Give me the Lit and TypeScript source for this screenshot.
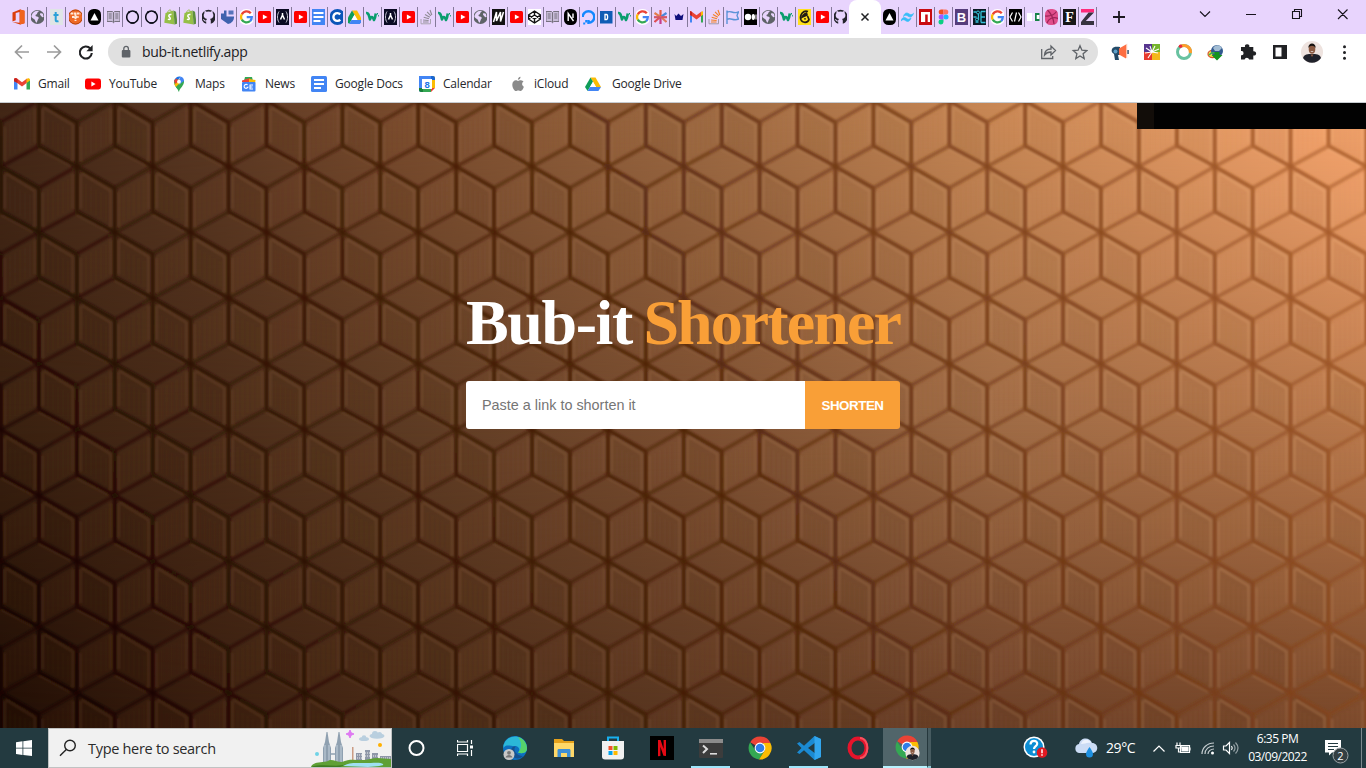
import { LitElement, html, css, svg } from "lit";
import { customElement } from "lit/decorators.js";

/* ---------- favicon drawings, each on a 16 x 16 grid ---------- */
const G = svg`<circle cx="8" cy="8" r="8" fill="#fff"/><g fill="none" stroke-width="2.3"><path d="M12.3 4.2A5.4 5.4 0 0 0 3.3 5.4" stroke="#ea4335"/><path d="M3.3 5.3A5.4 5.4 0 0 0 3.3 10.7" stroke="#fbbc05"/><path d="M3.3 10.6A5.4 5.4 0 0 0 11.7 12" stroke="#34a853"/><path d="M11.6 12.1A5.4 5.4 0 0 0 13.3 8.1H8.2" stroke="#4285f4"/></g>`;
const YT = svg`<rect x="0" y="2.5" width="16" height="11" rx="2.4" fill="#f00"/><path d="M6.4 5.6v4.8L10.6 8z" fill="#fff"/>`;
const YT_TAB = svg`<rect x="1.5" y="2" width="13" height="12" rx="1.5" fill="#f00"/><path d="M6.4 5.4v5.2L11 8z" fill="#fff"/>`;
const GLOBE = svg`<circle cx="8" cy="8" r="7" fill="#5f6368"/><path d="M3 4.5c2-2.6 4.5-3 6.3-2.6-.2 1.5-1.8 1.2-1.6 2.4.2 1.3-1.9 1-1.7 2.4.1 1 2.3.5 3 1.6.7 1.2-.5 1.8-.8 2.8l-1 2.6C5.5 13 6 11 4.8 10.2 3.2 9.2 1.7 8.5 1.9 7z" fill="#e8d4fd"/><path d="M10.5 4.5c1.4-.4 2.5-.2 3 .6l.6 3c-1 .4-1.9 0-2.2-.8-.3-.9-1.8-.9-1.4-2.8z" fill="#e8d4fd"/>`;
const W = svg`<path d="M1.500 4C4 3.500 4.500 6 5.500 10.500 6.500 7 8 7 9.500 11 10.500 9 11 7 11.300 4.500" fill="none" stroke="#0a9d6e" stroke-width="2.600" stroke-linejoin="round"/><path d="M13 4v1.500M14.200 6v1.500" stroke="#0a9d6e"/>`;
const TRI = svg`<rect x="1.500" width="13" height="16" rx="5.500" fill="#000"/><path d="M8 4l4 7.500H4z" fill="#fff"/>`;
const RING = svg`<ellipse cx="8" cy="8" rx="5.800" ry="6" fill="none" stroke="#0c0c18" stroke-width="1.500"/><path d="M3.500 3l2 .5M12.500 3l-2 .5M6 14h4" stroke="#0c0c18" stroke-width="1.600"/>`;
const SHOP = svg`<path d="M3 4l8-2.500 1.200 14L1.800 13.800z" fill="#95bf47"/><path d="M11 1.500l2.500 1.200L15 14.700l-2.900.8z" fill="#5e8e3e"/><path d="M5 4c.5-3.500 3.800-4 4-1" fill="none" stroke="#95bf47"/><path d="M9 5.500C6.500 5 5.500 7 7 8.200c1.500 1.200.8 3-1.600 1.900" fill="none" stroke="#fff" stroke-width="1.500"/>`;
const GH = svg`<path d="M8 .8a7.200 7.200 0 0 0-2.300 14v-2.400c-2 .4-2.500-.8-2.900-1.600-.3-.5-.7-.7-.7-.7 1.400-.3 1.800 1 2.400 1.300.6.300 1 .1 1.300-.2.100-.7.400-1 .8-1.300-2.200-.3-3.400-1.500-3.400-3.700 0-1 .4-1.700.8-2.200-.2-.7-.1-1.500.2-2.100 0 0 1 0 2 .9a7 7 0 0 1 3.700 0c1-.9 2-.9 2-.9.300.700.4 1.400.2 2.100.5.600.8 1.300.8 2.200 0 2.200-1.200 3.400-3.400 3.700.5.500.8 1 .8 1.800v3.100A7.200 7.200 0 0 0 8 .8z" fill="#24232b"/>`;
const BOOK = svg`<path d="M1.500 2.500H7L8 3.500 9 2.500h5.500v10H9.300L8 13.700 6.700 12.500H1.500z" fill="#c9bdd9" stroke="#77717f"/><path d="M8 3.500v10M3.200 5h3M3.200 7h3M3.200 9h3M9.800 5h3M9.800 7h3M9.800 9h3" stroke="#77717f"/>`;
const DOCS = svg`<rect width="16" height="16" rx="1.500" fill="#4285f4"/><path d="M3 4h10M3 8h10M3 12h7" stroke="#fff" stroke-width="2"/>`;
const ALPHA = svg`<rect x="1.500" width="13" height="16" fill="#0a0a23"/><path d="M4.500 2.500C2.500 5.500 2.500 10.500 4.500 13.500M11.500 2.500c2 3 2 8 0 11" stroke="#c8c8d4" fill="none"/><path d="M8 4v2L6 10.500M8 6l2 4.500" stroke="#fff" stroke-width="1.500" fill="none"/>`;
const DRIVE = svg`<path d="M5.500 1.500h5L16 11h-5z" fill="#fbbc04"/><path d="M5.500 1.500L0 11l2.600 4 5.400-9.300z" fill="#0f9d58"/><path d="M2.600 15h10.800L16 11H5z" fill="#4285f4"/><path d="M8 5.700L5 11h6z" fill="#fff"/>`;
const so = (c: string, d: string) => svg`<path d="M2.500 10v4.800h9.500V10" fill="none" stroke="${d}"/><path d="M4.500 13h5.600M4.600 11l5.500.5M5.200 8.300l5.300 1.500M6.500 5.400l4.800 2.800M8.600 2.800l3.800 4M11.500 1l1.800 5" stroke="${c}" stroke-width="1.150"/>`;
const GMAIL = svg`<path d="M0 3.500v10h3.500V6.800z" fill="#4285f4"/><path d="M12.500 6.800v6.700H16v-10z" fill="#34a853"/><path d="M0 3.500C0 2 2 1.700 3 2.500L8 6.300 13 2.500v4.300L8 10.500 3 6.800 0 5z" fill="#ea4335"/><path d="M12.500 3v4L16 4.600C16.300 2.300 14.300 1.500 12.500 3z" fill="#fbbc04"/><path d="M0 3.500v1.800L3.500 7V3C1.700 1.500 0 2.300 0 3.500z" fill="#c5221f"/>`;
const letter = (bg: string, t: string, fg = "#fff", fam = "Liberation Sans", sz = 13) => svg`<rect x="1.500" width="13" height="16" fill="${bg}"/><text x="8" y="12.700" text-anchor="middle" font-family="${fam}" font-weight="700" font-size="${sz}" fill="${fg}">${t}</text>`;

const OFFICE = svg`<path d="M9.500.5L14 1.800v12.400L9.500 15.500 2 13l7 .7V3L5.200 4v7.200L2 12.600V3.500z" fill="#dc3c0a"/><path d="M9.500.5L14 1.800v12.400l-4.500 1.300z" fill="#f0641e"/>`;
const TW_T = svg`<rect x="1.500" width="13" height="16" fill="#dfe5e6"/><path d="M7.200 3v8.200c0 1 1 1.400 2.800 1M5 6h5" stroke="#29a0d8" stroke-width="2" fill="none"/>`;
const ORANGE = svg`<circle cx="8" cy="8" r="7.400" fill="#ef6a25"/><path d="M3 4.500h10M8 4.500V12M4.500 8h7" stroke="#ffe9d8" stroke-width="1.900" stroke-dasharray="2.600 .6" fill="none"/><circle cx="8" cy="8" r="7" fill="none" stroke="#b54713"/>`;
const BLUE = svg`<path d="M7 1.500v6H14.500A7 7 0 0 1 8.500 15L1.500 10V4.500h3V1.500z" fill="#3f62ae"/><path d="M9 1.500h5v4H9z" fill="#5674bb"/>`;
const C = svg`<circle cx="9" cy="8" r="8" fill="#0b56b8"/><path d="M11.700 5.400a3.900 3.900 0 1 0 0 5.200" fill="none" stroke="#fff" stroke-width="2.400"/>`;
const M = svg`<rect x="1.500" width="13" height="16" fill="#111"/><path d="M3 13L6 3v9L10 3v9.500L13 3" fill="none" stroke="#fff" stroke-width="1.500"/>`;
const CODEPEN = svg`<rect x="1.500" width="13" height="16" fill="#fff"/><path d="M8 2l6 4v4l-6 4-6-4V6zM2 6l6 4 6-4M2 10l6-4 6 4M8 2v4M8 10v4" fill="none" stroke="#111" stroke-width="1.400"/>`;
const NEXT = svg`<rect x="1.500" width="13" height="16" rx="5.500" fill="#000"/><path d="M5.700 12V4.500L11 12M10.500 4.500V9" fill="none" stroke="#fff" stroke-width="1.400"/>`;
const OCEAN = svg`<path d="M2.200 8A5.800 5.800 0 1 1 8 13.800V11" fill="none" stroke="#1488ff" stroke-width="2.400"/><path d="M4.700 11H7v2.500H4.700zM2.700 13.500h2v2h-2z" fill="#1488ff"/>`;
const D = svg`<rect x="1.500" y="2" width="12.500" height="12.500" fill="#0f5cb5"/><path d="M6.500 5.500h1.500c1.500 0 1.500 5 0 5H6.500z" fill="none" stroke="#fff" stroke-width="1.300"/>`;
const AST = svg`<g stroke-width="2.200"><path d="M8 1v6" stroke="#e65a42"/><path d="M8 9v6" stroke="#c53e8b"/><path d="M2 4l5 3.400" stroke="#e37d4b"/><path d="M14 4L9 7.400" stroke="#4a87d9"/><path d="M2 13l5-4.500" stroke="#de4e56"/><path d="M14 13L9 8.500" stroke="#df7b5e"/><path d="M1 8.200h14" stroke="#d35668"/></g>`;
const CROWN = svg`<path d="M4 5l1.700 2L8 4.500 10.500 7 13 5l-1 6H5z" fill="#10107c"/>`;
const FLAG = svg`<path d="M2.500 1.500v13.500M2.500 3.500c3-3 6 2 11.500-.5l-1.500 3.500 1.500 3.500c-5 2.500-8-2-11.500.5" fill="none" stroke="#5b93d8" stroke-width="1.400"/>`;
const MEDIUM = svg`<rect x="1.500" width="13" height="16" fill="#000"/><circle cx="5.500" cy="8" r="3.200" fill="#fff"/><ellipse cx="10.800" cy="8" rx="1.700" ry="3" fill="#fff"/><path d="M13.500 5.500v5" stroke="#fff"/>`;
const CHIMP = svg`<rect x="1.500" width="13" height="16" fill="#ffe01b"/><path d="M11.500 2.500C7 .5 3 6 4.300 10.500 6 14.500 11.500 14 12.500 10.500L11 7" fill="none" stroke="#241c15" stroke-width="1.700"/><path d="M10.500 3C7 4 4.500 7 4.500 9.500L8 8l3.500-1.500z" fill="#241c15"/><circle cx="8.500" cy="9.800" r=".9" fill="#241c15"/>`;
const TAILWIND = svg`<path d="M4 7.500c.9-3.600 3.200-4.300 5.400-2.700 1.400 1.200 2.900 1.400 4.600-.5-.9 3.600-3.200 4.500-5.400 2.900C7.200 6 5.700 5.700 4 7.500zM1.500 12c.9-3.600 3.200-4.300 5.400-2.700 1.400 1.200 2.900 1.400 4.600-.5-.9 3.600-3.200 4.500-5.400 2.900C4.700 10.500 3.200 10.200 1.500 12z" fill="#38bdf8" stroke="#38bdf8" stroke-width=".7"/>`;
const NPM = svg`<rect x="1.500" width="13" height="16" fill="#c90a10"/><path d="M3.500 3h9v10h-2.300V5.500H7.700V13H3.500z" fill="#fff"/>`;
const FIGMA = svg`<path d="M8 .5H5.700a2.500 2.500 0 0 0 0 5H8z" fill="#f24e1e"/><path d="M8 .5h2.300a2.500 2.500 0 0 1 0 5H8z" fill="#ff7262"/><path d="M8 5.500H5.700a2.500 2.500 0 0 0 0 5H8z" fill="#a259ff"/><circle cx="10.500" cy="8" r="2.500" fill="#1abcfe"/><path d="M8 10.500H5.700a2.500 2.500 0 1 0 2.300 2.500z" fill="#0acf83"/>`;
const CIRCUIT = svg`<rect x="1.500" width="13" height="16" fill="#0a1a24"/><path d="M2 3h3M4 13h3M2 8h3M9.500 2.500h4.500M9.500 8h4M9.500 13.500H14M9.500 2.500v11M7 5v6" fill="none" stroke="#35c0d6" stroke-width="1.300"/><circle cx="6.500" cy="3.500" r="1.500" fill="none" stroke="#35c0d6"/><circle cx="5.500" cy="10.500" r="1.500" fill="none" stroke="#35c0d6"/>`;
const CODE = svg`<rect x="1.500" width="13" height="16" fill="#000"/><path d="M5 3.500L2.500 8 5 12.500M11 3.500L13.500 8 11 12.500M9 3.500l-2 9" fill="none" stroke="#fff" stroke-width="1.200"/>`;
const PATCH = svg`<path d="M1.500 4h5v8h-5z" fill="#fff"/><path d="M7 4h2.500v8H7z" fill="#f3e9ff"/><path d="M9.500 4H14v8H9.500z" fill="#168247"/><path d="M11.200 6H14v4h-2.800z" fill="#fff"/>`;
const DRIBBBLE = svg`<rect x="1.500" y="0" width="13" height="16" rx="5.500" fill="#e04e8b"/><path d="M4 1c4 4 6 9 6.500 14M1.500 7c5 .5 9-1 11.500-4.500M3.500 14c1.500-4.500 6-6.500 11-4.500" fill="none" stroke="#9c2458" stroke-width="1.200"/>`;
const Z = svg`<path d="M1.500 0h13v3.500h-13z" fill="#ff2a7a"/><path d="M14.500 3.500L6.300 12h8.200v4h-13v-3l7.600-9.500z" fill="#373340"/>`;

const tabsA = [OFFICE, GLOBE, TW_T, ORANGE, TRI, BOOK, RING, RING, SHOP, SHOP, GH, BLUE, G];
const tabsB = [YT_TAB, ALPHA, YT_TAB, DOCS, C, DRIVE, W, ALPHA, YT_TAB, so("#8f8b94", "#aaa4b0"), W, YT_TAB, GLOBE, M, YT_TAB, CODEPEN, BOOK, NEXT, OCEAN, D, W, G, AST, CROWN, GMAIL, so("#f48024", "#a39ba8"), FLAG, MEDIUM, GLOBE, W, CHIMP, YT_TAB];
const tabsC = [TRI, TAILWIND, NPM, FIGMA, letter("#563d7c", "B"), CIRCUIT, G, CODE, PATCH, DRIBBBLE, letter("#171717", "F", "#fff", "Liberation Serif", 14), Z];

const MAPS = svg`<path d="M8 16c-.6-3-5-5.500-5-10a5 5 0 0 1 1.200-3.300L8 6z" fill="#34a853"/><path d="M4.200 2.700A5 5 0 0 1 9.500.6L5 7.500 3.200 5z" fill="#1a73e8"/><path d="M9.500.6A5 5 0 0 1 13 6L8 8.500V4z" fill="#4285f4"/><path d="M13 5c.3 5-4.500 7-5 11-.5-2.500-2-3.500-3.200-5.200z" fill="#34a853"/><path d="M3.300 8L8 3l1 4-4.200 4z" fill="#fbbc04"/><path d="M3 5l2-2.500 3 2L4.500 8z" fill="#ea4335"/><circle cx="8" cy="5.700" r="1.900" fill="#fff"/>`;
const NEWS = svg`<path d="M4 1h7l1 4H3z" fill="#34a853"/><path d="M1 4.500l8-2.500 1 4H1z" fill="#ea4335"/><path d="M8 3l6.500 1L14 8H8z" fill="#fbbc04"/><rect x="1" y="6" width="13.500" height="9.500" rx="1" fill="#4285f4"/><path d="M6.600 9a2 2 0 1 0 .3 2.300H5.600M12 9H9v4h3M9 11h2.500" stroke="#fff" stroke-width="1.100" fill="none"/>`;
const CAL = svg`<path d="M0 0h12v4H4v12H2a2 2 0 0 1-2-2z" fill="#4285f4"/><path d="M12 0h2a2 2 0 0 1 2 2v10h-4z" fill="#fbbc04"/><path d="M12 0h2a2 2 0 0 1 2 2v2h-4z" fill="#1967d2"/><path d="M4 12h8v4H4z" fill="#34a853"/><path d="M12 12h4l-4 4z" fill="#ea4335"/><path d="M0 12h4v4H2a2 2 0 0 1-2-2z" fill="#188038"/><path d="M3 3h10v10H3z" fill="#fff"/><text x="8" y="11.500" text-anchor="middle" font-family="Liberation Sans" font-weight="700" font-size="9.500" fill="#1a73e8">8</text>`;
const APPLE = svg`<path d="M10.500.8c.1 1.700-1.100 3-2.600 3C7.800 2.300 9 1 10.500.8zM8 4.900c.7 0 1.500-.8 3-.7 1 .1 1.900.5 2.500 1.400-2 1.400-1.700 4.200.4 5.100-.5 1.600-1.700 4.300-3.300 4.300-.9 0-1.300-.6-2.300-.6-1.100 0-1.500.6-2.300.6-1.700 0-3.700-3.500-3.700-6.300S4.200 4.200 5.800 4.200c1 0 1.600.7 2.200.7z" fill="#8a8a8a"/>`;

const bookmarks: [any, string, number, number][] = [
  [GMAIL, "Gmail", 14, 31], [YT, "YouTube", 85, 46], [MAPS, "Maps", 171, 29], [NEWS, "News", 241, 29],
  [DOCS, "Google Docs", 311, 68], [CAL, "Calendar", 419, 47], [APPLE, "iCloud", 510, 34], [DRIVE, "Google Drive", 585, 70],
];

/* Tumbling-block relief: hubs sit on a staggered grid, every hub carries a rhombus and two faces. */
const P = 37.93, R = 65.8;
let dark = "", soft = "", light = "", glow = "", faceL = "", faceR = "", grain = "";
for (let r = -2; r < 11; r++) {
  for (let c = -1; c < 19; c++) {
    const x = 1 + P * (2 * c + (Math.abs(r) % 2)), y = 63.5 + R * r;
    const q = (a: number, b: number) => `${(x + a).toFixed(1)} ${(y + b).toFixed(1)}`;
    dark += `M${q(0, -44)}V${(y + 45).toFixed(1)}M${q(0, 0)}L${q(P, 21.5)}M${q(P, -20.5)}L${q(2 * P, 0)}`;
    soft += `M${q(0, 0)}L${q(P, -20.5)}M${q(P, 21.5)}L${q(2 * P, 0)}`;
    light += `M${q(5, 7.2)}L${q(P - 4.3, 24.5)}L${q(P - 4.3, 60)}M${q(4, 8)}V${(y + 42).toFixed(1)}`;
    glow += `M${q(P + 4, 26)}V${(y + 60).toFixed(1)}M${q(2 * P - 4.3, 8)}V${(y + 42).toFixed(1)}M${q(P, -17)}L${q(2 * P - 7, -1)}`;
    faceL += `M${q(0, 0)}L${q(P, 21.5)}L${q(P, R)}L${q(0, 45)}Z`;
    faceR += `M${q(P, 21.5)}L${q(2 * P, 0)}L${q(2 * P, 45)}L${q(P, R)}Z`;
    for (let k = 9; k < 32; k += 5) {
      grain += `M${q(k, 12 + k * 0.57)}V${(y + 39 + k * 0.54).toFixed(1)}M${q(P + k, 28 - k * 0.55)}V${(y + 60 - k * 0.54).toFixed(1)}`;
    }
  }
}

@customElement("app-root")
export class AppRoot extends LitElement {
  static styles = css`
    :host { display: flex; flex-direction: column; width: 1366px; height: 768px; overflow: hidden; font-family: "Open Sans", "Noto Sans", sans-serif; background: #fff; }
    svg { display: block; flex: none; }
    .tabs { height: 34px; background: #e8d4fd; display: flex; align-items: center; padding-left: 9px; }
    .tab { width: 18px; height: 20px; box-sizing: border-box; border-right: 1px solid #85799a; display: flex; align-items: center; justify-content: center; flex: none; }
    .wide { width: 19px; }
    .bare { border: none; width: 17px; }
    .active { width: 32px; height: 34px; background: #fff; border-radius: 8px 8px 0 0; display: flex; align-items: center; justify-content: center; flex: none; }
    .plus { margin-left: 16px; }
    .win { margin-left: 72px; display: flex; align-items: center; height: 28px; align-self: flex-start; }
    .bar { height: 36px; display: flex; align-items: center; flex: none; }
    .nav { width: 108px; height: 36px; }
    .pill { width: 990px; height: 28px; border-radius: 14px; background: #e0e0e0; display: flex; align-items: center; box-sizing: border-box; padding: 0 10px 0 12px; }
    .url { font-size: 14px; line-height: 28px; height: 28px; color: #202124; margin-left: 10px; flex: 1; letter-spacing: -0.32px; }
    .marks { height: 33px; flex: none; display: flex; box-sizing: border-box; padding: 0 0 5px 14px; align-items: center; border-bottom: 1px solid #c6cbd0; font-size: 12px; color: #27282c; }
    .mark { display: flex; align-items: center; flex: none; white-space: nowrap; letter-spacing: -0.2px; }
    .page { height: 625px; display: grid; flex: none; overflow: hidden; isolation: isolate; }
    .page > * { grid-area: 1 / 1; }
    .mid { background: linear-gradient(90deg, #3a2110 0, #492b18 200px, #5d3b23 400px, #7b4e30 680px, #a06c46 1000px, #ba794c 1366px); }
    .top { background: linear-gradient(90deg, #422616 0, #593722 200px, #794b2d 400px, #9c6942 700px, #c98855 1000px, #fba870 1366px); -webkit-mask-image: linear-gradient(#000, transparent 50%); mask-image: linear-gradient(#000, transparent 50%); }
    .low { background: linear-gradient(90deg, #200d04 0, #381d0e 200px, #472815 400px, #593620 680px, #6c4027 1000px, #784729 1366px); -webkit-mask-image: linear-gradient(transparent 50%, #000); mask-image: linear-gradient(transparent 50%, #000); }
    .relief { z-index: 1; }
    .redact { z-index: 2; width: 212px; height: 26px; background: #020202; border-left: 17px solid #120d09; justify-self: end; }
    .hero { z-index: 2; width: 434px; justify-self: center; padding-top: 180px; }
    h1 { margin: 0; height: 80px; font: 700 64px/79px "Liberation Serif", serif; color: #fff; display: flex; justify-content: space-between; white-space: nowrap; }
    .w1 { letter-spacing: -1.4px; }
    .w2 { letter-spacing: -1.9px; color: #f99f37; }
    .form { display: flex; height: 48px; margin-top: 18px; border-radius: 3px; overflow: hidden; font-family: "Liberation Sans", Arial, sans-serif; }
    .field { flex: 1; background: #fff; padding-left: 16px; font-size: 14.400px; line-height: 48px; color: #757575; }
    .go { width: 95px; background: #f99f37; color: #fff; font-weight: 700; font-size: 13.330px; line-height: 49px; text-align: center; letter-spacing: -0.45px; }
    .task { height: 40px; background: #233a40; display: flex; flex: none; color: #fff; overflow: hidden; }
    .start { width: 48px; }
    .search { width: 344px; flex: none; box-sizing: border-box; border: 1px solid #c0c2c2; background: #f1f1f1; display: flex; align-items: center; color: #2b2b2b; font-size: 14.500px; }
    .search span { flex: 1; margin-left: 11px; letter-spacing: -0.3px; }
    .app { width: 49px; height: 40px; display: flex; align-items: center; justify-content: center; box-sizing: border-box; flex: none; }
    .run { box-shadow: inset 5px 0 #233a40, inset -5px 0 #233a40, inset 0 -2px #9fe6fb; }
    .on { width: 44px; margin-left: 1px; background: #51656a; border-bottom: 2px solid #b8f3ff; padding: 2px 0 0 6px; }
    .stack { width: 4px; flex: none; height: 40px; background: #475b60; border-left: 1px solid #26383d; box-sizing: border-box; border-bottom: 2px solid #8cc8d4; }
    .help { margin-left: 92px; align-self: center; }
    .cloud { margin-left: 25px; align-self: center; }
    .temp { font-size: 14px; line-height: 40px; width: 46px; flex: none; margin-left: 8px; letter-spacing: -0.4px; }
    .tray { align-self: center; }
    .clock { width: 75px; flex: none; font-size: 12px; line-height: 18px; text-align: center; padding-top: 2px; letter-spacing: -0.5px; white-space: nowrap; }
    .note { margin-left: 1px; }
  `;

  tab(icon: any, cls = "") {
    return html`<div class="tab ${cls}"><svg width="13" height="16" viewBox="1.5 0 13 16">${icon}</svg></div>`;
  }

  chrome() {
    return svg`<path d="M0 0L-9.800-5.700A11.400 11.400 0 0 1 10.500-5H0z" fill="#ea4335"/><path d="M-9.900-5.700A11.400 11.400 0 0 0-1 11.400L4.500 2.500-4.500 2.500z" fill="#34a853"/><path d="M10.400-5A11.400 11.400 0 0 1-1 11.400L4.800 2.300 3-5z" fill="#fbbc04"/><circle r="5.400" fill="#fff"/><circle r="4.300" fill="#2f7de9"/>`;
  }

  face() {
    return svg`<circle r="11" fill="#eee3df"/><path d="M-9 6C-8 2-4 2 0 2s8 0 9 4A11 11 0 0 1-9 6z" fill="#20222b"/><ellipse cy="-3" rx="3.300" ry="4.800" fill="#8b5a42"/><path d="M-3.600-4c-.5-6 7.700-6 7.200 0C2-7-2-7-3.600-4z" fill="#14110f"/><path d="M-1.500 2.500L0 5l1.500-2.500z" fill="#8b5a42"/><path d="M-1.700-1q1.700 1.500 3.400 0z" fill="#fff"/>`;
  }

  render() {
    let edge = 14;
    return html`
      <div class="tabs">
        ${tabsA.map((t) => this.tab(t, "wide"))}${tabsB.map((t) => this.tab(t))}
        <div class="tab bare"><svg width="13" height="16" viewBox="1.5 0 13 16">${GH}</svg></div>
        <div class="active"><svg width="32" height="34" viewBox="0 0 32 34"><path d="M12.500 13.500l7 7M19.500 13.500l-7 7" stroke="#202124" stroke-width="1.500"/></svg></div>
        ${tabsC.map((t) => this.tab(t))}
        <svg class="plus" width="12" height="12" viewBox="0 0 12 12"><path d="M6 0v12M0 6h12" stroke="#1c1820" stroke-width="1.800"/></svg>
        <svg class="win" width="160" height="28" viewBox="0 0 160 28" fill="none" stroke="#17131c" stroke-width="1.100"><path d="M3 11.500l5 5 5-5M49 14.500h10M95.500 11.500h7v7h-7zM97.500 11V9.500h7v7h-2M141 9.500l9.500 9.500M150.500 9.500L141 19"/></svg>
      </div>
      <div class="bar">
        <svg class="nav" viewBox="0 0 108 36" fill="none"><path d="M29 18H16M22 11.500L15.500 18l6.500 6.500M47 18h13M54 11.500l6.500 6.500-6.500 6.500" stroke="#9b9b9b" stroke-width="1.700"/><path d="M90.300 14.500A6 6 0 1 0 91.800 19" stroke="#202124" stroke-width="2.100"/><path d="M92.600 11v6.200h-6.200z" fill="#202124"/></svg>
        <div class="pill">
          <svg width="12" height="14" viewBox="0 0 12 14"><rect x="1.800" y="5" width="8.600" height="7.500" rx="1" fill="#5f6368"/><path d="M3.800 5.500V3.700a2.300 2.300 0 0 1 4.600 0v1.800" fill="none" stroke="#5f6368" stroke-width="1.300"/></svg>
          <span class="url">bub-it.netlify.app</span>
          <svg width="48" height="18" viewBox="0 0 48 18" fill="none" stroke="#5f6368" stroke-width="1.300"><path d="M1.700 6v9.500h11V13M4.500 12c.3-4 3-6 6.500-6V3l4.500 4.500L11 12V9c-3 0-5 1-6.500 3z"/><path d="M40 2.700l1.900 4.500 4.900.4-3.700 3.200 1.100 4.800L40 13l-4.200 2.600 1.100-4.800-3.700-3.200 4.900-.4z"/></svg>
        </div>
        <svg width="268" height="36" viewBox="1098 34 268 36">
          <path d="M1112 49c2-3 5-2 8-2v8h-2l1 5h-4l-1-6c-2-1-3-3-2-5z" fill="#234a68"/><circle cx="1115.500" cy="51.500" r="2" fill="#5da0c9"/><path d="M1119 48.500l7-4v14l-7-4z" fill="#fd6e42"/><path d="M1128 50v4" stroke="#234a68" stroke-width="1.500"/><path d="M1126 44.500l1.200-1v15l-1.200-1z" fill="#ffc4ad"/>
          <path d="M1144 44h8v8h-8z" fill="#57368f"/><path d="M1152 44h8v8h-8z" fill="#76b52d"/><path d="M1144 52h8v8h-8z" fill="#e6392f"/><path d="M1152 52h8v8h-8z" fill="#f4b81c"/><path d="M1152 52l-6-4M1152 52l-2-6M1152 52l3-6M1152 52l7-3M1152 52l-4 6M1152 52l-7 1M1152 52l6 1" stroke="#fff" stroke-width="1.100"/>
          <circle cx="1184" cy="52" r="6.500" fill="none" stroke="#68c2a0" stroke-width="3"/><path d="M1181 46.200a6.500 6.500 0 0 1 9.400 6.800" fill="none" stroke="#ff9e2d" stroke-width="3"/><circle cx="1180.500" cy="46.300" r="1.800" fill="#e92c3b"/>
          <ellipse cx="1212.500" cy="54" rx="4.500" ry="3.600" fill="#f7e04a" stroke="#d4552b" stroke-width="1.200"/><circle cx="1217" cy="51" r="6" fill="#31598f"/><path d="M1213 48c3-4 7-3 9 0l-3 3h-4z" fill="#a3bdd4"/><path d="M1209 55c3-3 5-3 8-1" fill="none" stroke="#3cb34a" stroke-width="1.500"/><path d="M1214.500 52h5v3h3l-5.500 5.500-5.500-5.500h3z" fill="#14941c"/>
          <path d="M1241 47h4a2.200 2.200 0 1 1 4.300 0h4v4.300a2.200 2.200 0 1 1 0 4.200v4h-4.200a2.300 2.300 0 0 0-4.500 0H1241v-4.300a2.100 2.100 0 1 0 0-4.100z" fill="#202124"/>
          <path d="M1273 45h14v14h-14zM1275.500 47.500v9h6v-9z" fill="#202124" fill-rule="evenodd"/>
          <g transform="translate(1312 52)">${this.face()}</g>
          <g fill="#202124"><circle cx="1344.500" cy="46.800" r="1.500"/><circle cx="1344.500" cy="52.500" r="1.500"/><circle cx="1344.500" cy="58.200" r="1.500"/></g>
        </svg>
      </div>
      <div class="marks">
        ${bookmarks.map(([icon, name, x, w]) => {
          const gap = x - edge;
          const space = name === "Google Drive" ? 11 : 8;
          edge = x + 16 + space + w;
          return html`<div class="mark" style="margin-left:${gap}px;width:${16 + space + w}px;gap:${space}px"><svg width="16" height="16" viewBox="0 0 16 16">${icon}</svg><span>${name}</span></div>`;
        })}
      </div>
      <div class="page">
        <div class="mid"></div><div class="top"></div><div class="low"></div>
        <svg class="relief" width="1366" height="625" viewBox="0 0 1366 625" fill="none">
          <defs>
            <linearGradient id="d" gradientUnits="userSpaceOnUse" x1="100" y1="626" x2="1300" y2="0"><stop offset="0" stop-color="#150300"/><stop offset=".5" stop-color="#4e2007"/><stop offset="1" stop-color="#a65a27"/></linearGradient>
            <linearGradient id="l" gradientUnits="userSpaceOnUse" x1="100" y1="626" x2="1300" y2="0"><stop offset="0" stop-color="#754b30"/><stop offset=".5" stop-color="#ad7a52"/><stop offset="1" stop-color="#ffc084"/></linearGradient>
            <filter id="b" x="0" y="0" width="100%" height="100%"><feGaussianBlur stdDeviation=".9"/></filter>
          </defs>
          <path d="${faceL}" fill="#3a1400" opacity=".04"/><path d="${faceR}" fill="#ffb070" opacity=".02"/>
          <g filter="url(#b)"><path d="${grain}" stroke="url(#l)" stroke-width="1.400" opacity=".07"/><path d="${light}" stroke="url(#l)" stroke-width="1.500" opacity=".36"/><path d="${glow}" stroke="url(#l)" stroke-width="1.500" opacity=".25"/><path d="${soft}" stroke="url(#d)" stroke-width="3.800" opacity=".52"/><path d="${dark}" stroke="url(#d)" stroke-width="4.100" opacity=".76"/></g>
        </svg>
        <div class="redact"></div>
        <div class="hero">
          <h1><span class="w1">Bub-it</span><span class="w2">Shortener</span></h1>
          <div class="form"><div class="field">Paste a link to shorten it</div><div class="go">SHORTEN</div></div>
        </div>
      </div>
      <div class="task">
        <svg class="start" height="40" viewBox="0 0 48 40"><path d="M16 14.200l6.500-.9v6.400H16zM23.300 13.200L32 12v7.700h-8.700zM16 20.500h6.500v6.400l-6.500-.9zM23.300 20.500H32V28l-8.700-1.100z" fill="#fff"/></svg>
        <div class="search">
          <svg width="28" height="38" viewBox="0 0 28 38" fill="none" stroke="#222" stroke-width="1.400"><circle cx="21" cy="16.500" r="5.300"/><path d="M17.300 20.500L11 26.800"/></svg>
          <span>Type here to search</span>
          <svg width="80" height="38" viewBox="311 729 80 38">
            <circle cx="317" cy="754" r="2" fill="#6fd2e6"/><circle cx="380" cy="745" r="2" fill="#ffb000"/><path d="M350 730l1.200 2.800 2.800 1.200-2.800 1.200-1.200 2.800-1.200-2.800L346 734l2.800-1.200z" fill="#df79f2" stroke="#df79f2"/>
            <g fill="#b9cfdf"><ellipse cx="364" cy="739" rx="5" ry="2"/><circle cx="364" cy="737.500" r="2.300"/><ellipse cx="377" cy="736" rx="7.500" ry="2.700"/><circle cx="375" cy="734" r="3"/><circle cx="379.500" cy="734.500" r="2.500"/></g>
            <path d="M323 763v-15l2-6 1.500-10h1l1.500 10 2 6v15zM335 763v-15l2-6 1.500-10h1l1.500 10 2 6v15z" fill="#8fa0b0"/><path d="M325 745v17M329 745v17M337 745v17M341 745v17" stroke="#c4d1dc"/><path d="M331 754h5" stroke="#8fa0b0" stroke-width="1.500"/>
            <path d="M352 747h1.500v15H352z" fill="#cb9c84"/><path d="M356 753h6v9h-6zM365 750h5v12h-5zM372 753h6v9h-6zM380 756h11v6h-11z" fill="#8f97a8"/><path d="M357 755h5M357 758h5M365 753h5M365 756h5M373 756h5M381 758h9" stroke="#f1f1f1" stroke-dasharray="1 1"/>
            <path d="M311 767c2-6 12-4 17-6 3-3 8 1 14 1 10-5 18 0 28-3 8-2 14 0 21 0v8z" fill="#5fa035"/><path d="M311 767c12-4 25 1 37-3l-8 3z" fill="#3e7c20"/><path d="M343 766c6-4 14-3 22-3s16-1 18 1-7 2-15 3z" fill="#9fe0f2"/>
          </svg>
        </div>
        <div class="app"><svg width="20" height="20" viewBox="0 0 20 20"><circle cx="9.500" cy="10" r="7" fill="none" stroke="#fff" stroke-width="2"/></svg></div>
        <div class="app"><svg width="18" height="18" viewBox="0 0 18 18" fill="none" stroke="#fff" stroke-width="1.200"><path d="M.5 5.500h10v7H.5zM.5 1v2h10V1M.5 17v-2h10v2M14.500 1v4M14.500 11v6"/><path d="M13 6.500h3v3h-3z" fill="#fff" stroke="none"/></svg></div>
        <div class="app"><svg width="24" height="24" viewBox="0 0 24 24"><circle cx="12" cy="12" r="12" fill="#0d6fc0"/><path d="M.5 9A12 12 0 0 1 24 12c0 5-4.500 6-9 4.500 3-2 1-6.500-3-6.500C6 10 3 8 .5 12z" fill="#2bb7d8"/><path d="M15 1a12 12 0 0 1 9 11c0 5-4.500 6-9 4.500C19 12 19 6 15 1z" fill="#57d36a"/><path d="M8 15c0-4 3-5 5-4.500C9.500 13 12 19 20 20 15 25 8 22 8 15z" fill="#15518f"/><circle cx="6" cy="18.500" r="5.500" fill="#c8c8c8"/><circle cx="6" cy="16.800" r="1.900" fill="#777"/><path d="M2.600 21.500c.5-3.500 6.300-3.500 6.800 0z" fill="#777"/></svg></div>
        <div class="app"><svg width="22" height="20" viewBox="0 0 22 20"><path d="M1 1h8l2 2h10v16H1z" fill="#e5a11b"/><path d="M1 5h20v14H1z" fill="#ffd868"/><path d="M4.500 19v-6.500c0-1 .5-1.500 1.500-1.500h10c1 0 1.500.5 1.500 1.500V19h-3.500v-4H8v4z" fill="#3e8fd6"/></svg></div>
        <div class="app"><svg width="22" height="24" viewBox="0 0 22 24"><path d="M6 6V1.500h10V6" fill="none" stroke="#18b0ee" stroke-width="2"/><path d="M0 5h22v15.500a3 3 0 0 1-3 3H3a3 3 0 0 1-3-3z" fill="#f1f1f1"/><path d="M6.500 10h4v4h-4z" fill="#f2502c"/><path d="M11.500 10h4v4h-4z" fill="#7fba00"/><path d="M6.500 15h4v4h-4z" fill="#00a4ef"/><path d="M11.500 15h4v4h-4z" fill="#ffb900"/></svg></div>
        <div class="app"><svg width="24" height="24" viewBox="0 0 24 24"><path d="M0 0h24v24H0z" fill="#000"/><path d="M8 4h2.600l3 9V4H16v16l-2.600-.3-3-9V20L8 20.200z" fill="#e50914"/></svg></div>
        <div class="app run"><svg width="24" height="19" viewBox="0 0 24 19"><rect width="24" height="19" rx="1" fill="#3c3c3c"/><path d="M0 0h24v4H0z" fill="#8c8c8c"/><path d="M4 6.500l4 3.500-4 4" fill="none" stroke="#ddd" stroke-width="2"/><path d="M11 14.800h7" stroke="#ddd" stroke-width="1.600"/></svg></div>
        <div class="app"><svg width="24" height="24" viewBox="-12 -12 24 24">${this.chrome()}</svg></div>
        <div class="app run"><svg width="24" height="24" viewBox="0 0 24 24"><path d="M17.500 0L24 3v18l-6.500 3L7 14.200 2.500 18 0 16.500 4.500 12 0 7.500 2.500 6 7 9.800zM18 6.800L11 12l7 5.200z" fill="#1b8ad2" fill-rule="evenodd"/><path d="M17.500 0L24 3v18l-6.500 3z" fill="#32a6ee"/></svg></div>
        <div class="app"><svg width="22" height="24" viewBox="0 0 22 24"><ellipse cx="11" cy="12" rx="8.500" ry="9.500" fill="none" stroke="#e5142b" stroke-width="4"/><path d="M13 2c5 0 7.300 5 7.300 10s-2.300 10-7.300 10" fill="none" stroke="#f9505e" stroke-width="2"/></svg></div>
        <div class="app on"><svg width="26" height="26" viewBox="-12 -12 26 26">${this.chrome()}<g transform="translate(5.500 6) scale(.65)">${this.face()}</g></svg></div>
        <div class="stack"></div>
        <svg class="help" width="26" height="24" viewBox="0 0 26 24"><circle cx="11" cy="11" r="10.500" fill="#fff"/><circle cx="11" cy="11" r="9" fill="#0d8ed4"/><path d="M7.500 8.500c0-5 7-4.500 6.700-.5-.2 2-3.200 2.500-3.200 5" fill="none" stroke="#fff" stroke-width="2.200"/><circle cx="11" cy="16" r="1.400" fill="#fff"/><circle cx="19" cy="16.500" r="5.300" fill="#e21a22"/><path d="M19 13.200v4M19 18.300v1.500" stroke="#fff" stroke-width="1.500"/></svg>
        <svg class="cloud" width="24" height="20" viewBox="0 0 24 20"><path d="M5 15a4.600 4.600 0 0 1 0-9c1-7 11-7.500 13-1 7 0 7 10 0 10z" fill="#cbdcf5"/><path d="M7 6c1-5 8-6 10-1-4-1-6 1-10 1z" fill="#edf3fd"/><path d="M15.500 9c2 3 3.500 5 3.500 7a3.500 3.500 0 0 1-7 0c0-2 1.500-4 3.500-7z" fill="#1d8fe0"/></svg>
        <span class="temp">29°C</span>
        <svg class="tray" width="88" height="24" viewBox="1152 736 88 24" fill="none" stroke="#fff" stroke-width="1.200"><path d="M1153.500 751.500l5.500-5.500 5.500 5.500M1180.500 745.500h9v7h-9zM1190 747.500v3"/><path d="M1182 747h6v4h-6z" fill="#fff"/><path d="M1176 745.500h5v2.500h-5zM1177 742.500v3M1180 742.500v3M1178.500 748v4h2"/><g stroke="#c5cccf"><path d="M1202 754c0-6 5-11 12-11M1205 754c0-5 4-8 9-8M1208 754c0-3 3-5 6-5"/></g><circle cx="1212.500" cy="753" r="1.500" fill="#fff" stroke="none"/><path d="M1223.500 746h2.500l3.500-3.500v11L1226 750h-2.500zM1231.500 746q1.500 2 0 4"/><path d="M1233.500 744.500q3 3.500 0 7M1235.500 742.500q5 5.500 0 11" stroke="#93a0a4"/></svg>
        <div class="clock">6:35 PM<br>03/09/2022</div>
        <svg class="note" width="50" height="40" viewBox="1316 728 50 40"><path d="M1325 740h16v12.500h-9l-3 3v-3h-4z" fill="#fff"/><path d="M1328 743.500h10M1328 746.500h10M1328 749.500h6" stroke="#233a40"/><circle cx="1340.500" cy="755.500" r="7.500" fill="#343f43" stroke="#9aa3a6"/><text x="1340.500" y="759.500" text-anchor="middle" font-family="Open Sans" font-size="11" fill="#fff">2</text><path d="M1361.500 728v40" stroke="#7b898d"/></svg>
      </div>`;
  }
}
